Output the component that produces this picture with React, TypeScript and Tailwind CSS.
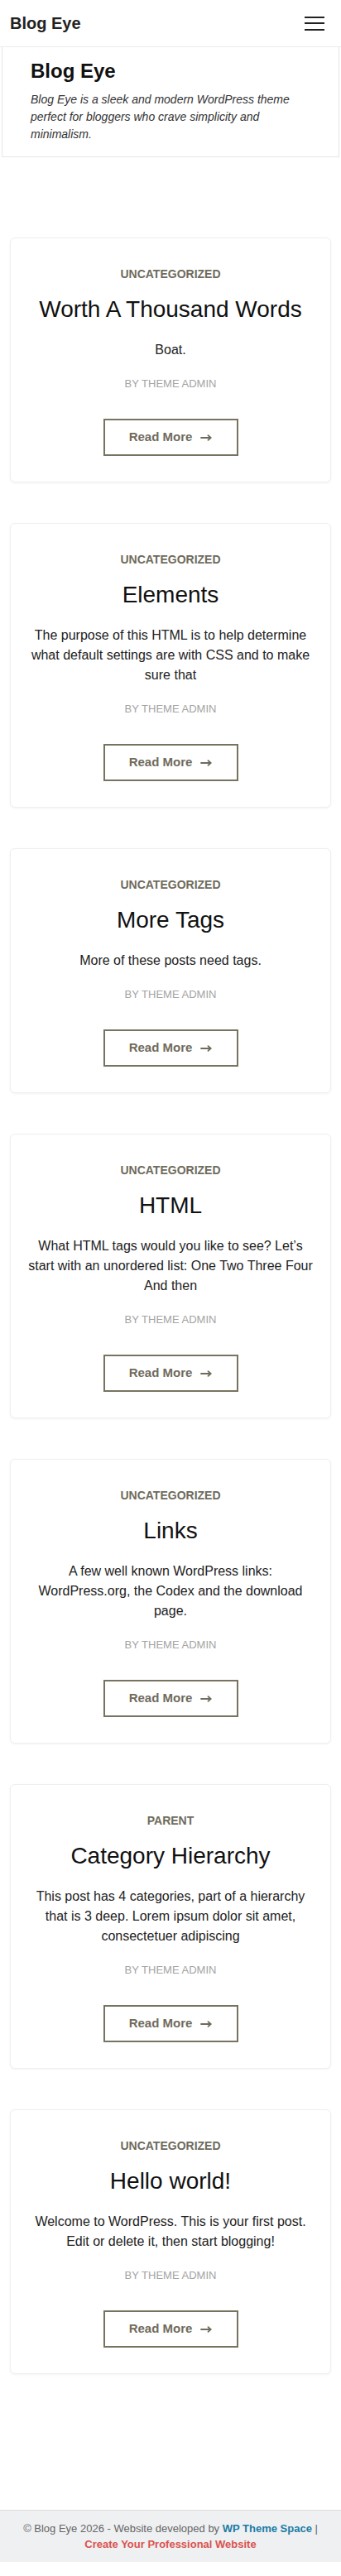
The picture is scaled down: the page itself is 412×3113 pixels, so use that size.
import React from 'react';

type Post = {
  category: string;
  title: string;
  excerpt: string;
};

const POSTS: Post[] = [
  { category: 'UNCATEGORIZED', title: 'Worth A Thousand Words', excerpt: 'Boat.' },
  {
    category: 'UNCATEGORIZED',
    title: 'Elements',
    excerpt: 'The purpose of this HTML is to help determine what default settings are with CSS and to make sure that',
  },
  { category: 'UNCATEGORIZED', title: 'More Tags', excerpt: 'More of these posts need tags.' },
  {
    category: 'UNCATEGORIZED',
    title: 'HTML',
    excerpt: 'What HTML tags would you like to see? Let\u2019s start with an unordered list: One Two Three Four And then',
  },
  {
    category: 'UNCATEGORIZED',
    title: 'Links',
    excerpt: 'A few well known WordPress links: WordPress.org, the Codex and the download page.',
  },
  {
    category: 'PARENT',
    title: 'Category Hierarchy',
    excerpt: 'This post has 4 categories, part of a hierarchy that is 3 deep. Lorem ipsum dolor sit amet, consectetuer adipiscing',
  },
  {
    category: 'UNCATEGORIZED',
    title: 'Hello world!',
    excerpt: 'Welcome to WordPress. This is your first post. Edit or delete it, then start blogging!',
  },
];

const ArrowRight = () => (
  <svg width="14" height="8" viewBox="0 0 14 8" fill="none" stroke="currentColor" strokeWidth="1.8" strokeLinecap="round" strokeLinejoin="round">
    <line x1="1" y1="4" x2="12.5" y2="4" />
    <polyline points="9.5,1.2 12.6,4 9.5,6.8" />
  </svg>
);

const PostCard: React.FC<{ post: Post }> = ({ post }) => (
  <article className="bg-white border border-[#efefef] rounded-md shadow-[0_1px_3px_rgba(0,0,0,0.05)] px-[19px] pt-[33px] pb-[31px] flex flex-col items-center text-center">
    <div className="text-[14px] leading-[20px] font-bold text-[#6e6b5c]">{post.category}</div>
    <h2 className="mt-[16px] text-[28px] leading-[34px] text-[#111]">{post.title}</h2>
    <p className="mt-[20px] text-[16px] leading-[24px] text-[#222]">{post.excerpt}</p>
    <div className="mt-[19px] text-[13px] leading-[20px] text-[#a3a3a3]">BY THEME ADMIN</div>
    <button className="mt-[32px] w-[163px] h-[45px] border-2 border-[#77735f] flex items-center justify-center gap-[10px] text-[15px] font-bold text-[#6f6b5c]">
      Read More
      <ArrowRight />
    </button>
  </article>
);

export default function App() {
  return (
    <div className="bg-white font-['Liberation_Sans',Arial,sans-serif] pb-[17px]">
      {/* Header */}
      <header className="h-[57px] border-b border-[#ececec] pl-3 pr-5 flex items-center justify-between">
        <div className="text-[20px] font-bold text-[#222]">Blog Eye</div>
        <button className="w-[24px] flex flex-col gap-[5.5px]" aria-label="Menu">
          <span className="block h-[2px] bg-[#222]" />
          <span className="block h-[2px] bg-[#222]" />
          <span className="block h-[2px] bg-[#222]" />
        </button>
      </header>

      {/* Hero */}
      <section className="mx-[2px] border border-t-0 border-[#e6e6e6] pl-[34px] pr-[34px] pt-[14px] pb-[16px]">
        <h1 className="text-[24px] leading-[29px] font-bold text-[#111]">Blog Eye</h1>
        <p className="mt-[10px] text-[14px] leading-[21px] italic text-[#333]">
          Blog Eye is a sleek and modern WordPress theme perfect for bloggers who crave simplicity and minimalism.
        </p>
      </section>

      {/* Posts */}
      <main className="mx-3 pt-[97px] pb-[164px] flex flex-col gap-[49px]">
        {POSTS.map((p) => (
          <PostCard key={p.title} post={p} />
        ))}
      </main>

      {/* Footer */}
      <footer className="border-t border-[#dcdcdc] bg-[#eef0f2] px-4 py-[12px] text-center text-[13px] leading-[19px] text-[#666]">
        © Blog Eye 2026 - Website developed by <span className="font-bold text-[#1a7ca5]">WP Theme Space</span> |{' '}
        <span className="font-bold text-[#d9534f]">Create Your Professional Website</span>
      </footer>
    </div>
  );
}
